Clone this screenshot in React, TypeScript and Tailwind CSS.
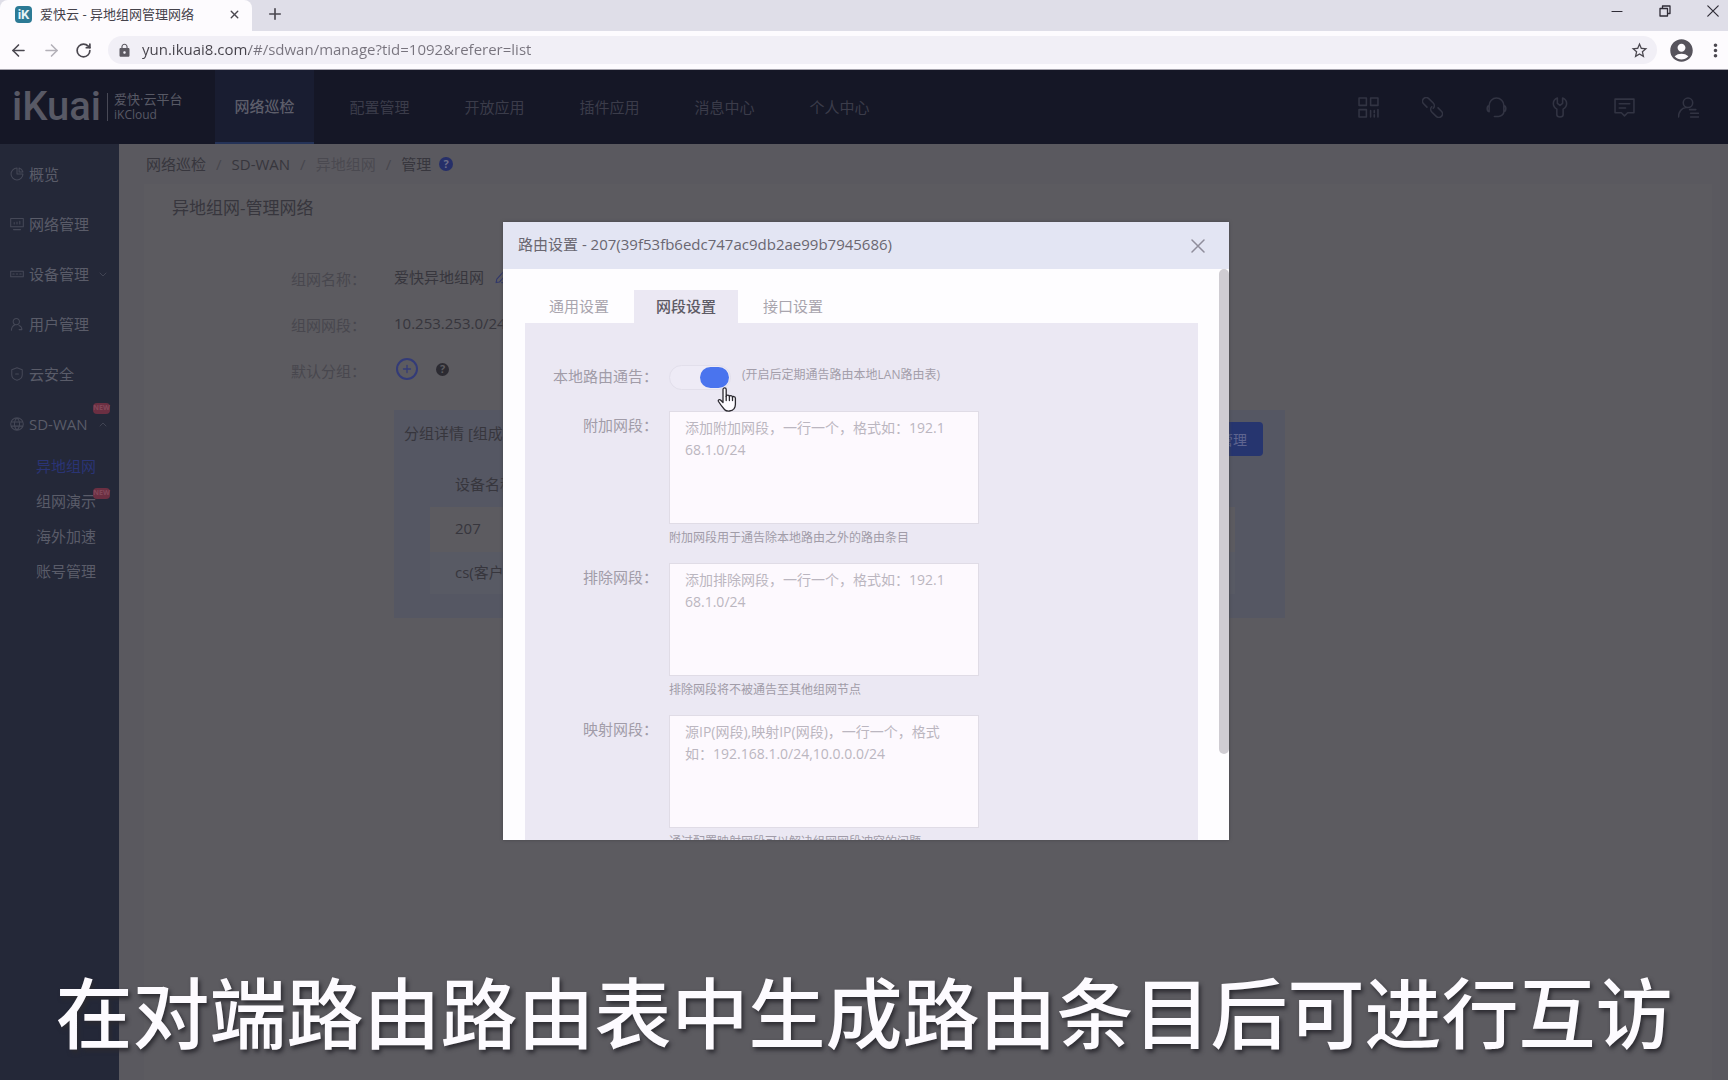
import React from "react";
import { ArrowLeft, ArrowRight, RotateCw, Plus, X } from "lucide-react";
import { MdLock, MdStarBorder, MdAccountCircle, MdMoreVert } from "react-icons/md";

const stroke = {
  fill: "none",
  stroke: "currentColor",
  strokeWidth: 1.5,
  strokeLinecap: "round" as const,
  strokeLinejoin: "round" as const,
};

function Svg({ size = 20, children }: { size?: number; children: React.ReactNode }) {
  return (
    <svg width={size} height={size} viewBox="0 0 20 20" {...stroke} aria-hidden="true" className="shrink-0">
      {children}
    </svg>
  );
}

function BrowserChrome() {
  return (
    <div className="shrink-0 border-b border-[#a5a3ac] bg-[#fdfbfe] text-[#4a474f]">
      <div className="flex h-[31px] items-stretch bg-[#dfdee8]">
        <div className="flex w-[252px] items-center rounded-t-lg bg-[#fdfbfe] pr-[11px] pb-0.5 pl-[15px]">
          <span className="mr-2 flex h-[17px] w-[17px] items-center justify-center rounded-sm bg-[#2c7a95] font-[Roboto] text-[13px] font-bold text-[#e6f4f8]">
            iK
          </span>
          <span className="flex-1 text-[13px] whitespace-nowrap text-[#45424a]">爱快云 - 异地组网管理网络</span>
          <button type="button" aria-label="关闭标签页">
            <X size={13} strokeWidth={2.6} />
          </button>
        </div>
        <button type="button" aria-label="新标签页" className="ml-3.5 pb-1">
          <Plus size={18} strokeWidth={2.2} />
        </button>
        <div className="ml-auto flex gap-9 pt-[5px] pr-[9px] text-[#2f2c36]">
          <button type="button" aria-label="最小化" className="h-3">
            <svg width="12" height="12" viewBox="0 0 12 12" {...stroke} strokeWidth={1.2}>
              <path d="M1 6.5h10" />
            </svg>
          </button>
          <button type="button" aria-label="还原" className="h-3">
            <svg width="12" height="12" viewBox="0 0 12 12" {...stroke} strokeWidth={1.3}>
              <path d="M1 3.5h7.5V11H1zM3.5 3.5V1H11v7.5H8.5" />
            </svg>
          </button>
          <button type="button" aria-label="关闭" className="h-3">
            <svg width="12" height="12" viewBox="0 0 12 12" {...stroke} strokeWidth={1.2}>
              <path d="M.8.8l10.4 10.4M11.2.8L.8 11.2" />
            </svg>
          </button>
        </div>
      </div>
      <div className="flex h-[38px] items-center pl-[9px]">
        <button type="button" aria-label="后退">
          <ArrowLeft size={19} strokeWidth={2} />
        </button>
        <button type="button" aria-label="前进" className="ml-3.5 text-[#b3b0b8]">
          <ArrowRight size={19} strokeWidth={2} />
        </button>
        <button type="button" aria-label="刷新" className="ml-3.5">
          <RotateCw size={17} strokeWidth={2.4} />
        </button>
        <div className="ml-4 flex h-7 flex-1 items-center rounded-full bg-[#f1eff6] pr-2 pl-[9px]">
          <MdLock size={15} className="mr-2.5 shrink-0 text-[#5d5a62]" />
          <input
            type="text"
            aria-label="地址"
            defaultValue="yun.ikuai8.com/#/sdwan/manage?tid=1092&referer=list"
            className="h-6 min-w-0 flex-1 bg-[linear-gradient(90deg,#45424a_107px,#77737d_107px)] bg-clip-text pb-0.5 text-[15px] text-transparent outline-none"
          />
          <MdStarBorder size={19} />
        </div>
        <MdAccountCircle size={27} className="ml-[11px] text-[#56535c]" />
        <button type="button" aria-label="菜单" className="ml-2.5 mr-0.5">
          <MdMoreVert size={21} />
        </button>
      </div>
    </div>
  );
}

const navItems = ["网络巡检", "配置管理", "开放应用", "插件应用", "消息中心", "个人中心"];

function Header() {
  return (
    <header className="flex h-[74px] shrink-0 items-stretch bg-[#151726] text-[#3b3c4a]">
      <div className="flex w-[215px] items-center pl-3 text-[#585965]">
        <span className="font-[Roboto] text-[40px] leading-8 font-medium">iKuai</span>
        <span className="ml-1.5 h-7 w-px bg-[#484956]" />
        <span className="ml-1.5 flex flex-col text-[12px] leading-[15px] whitespace-nowrap">
          <span className="text-[13px]">爱快·云平台</span>
          <span>iKCloud</span>
        </span>
      </div>
      <nav className="flex gap-4 text-[15px]">
        {navItems.map((item, i) => (
          <a
            key={item}
            href="#"
            className={
              i === 0
                ? "flex w-[99px] items-center justify-center border-b-2 border-[#253358] bg-[#191d31] font-medium text-[#5d5e6a]"
                : "flex w-[99px] items-center justify-center"
            }
          >
            {item}
          </a>
        ))}
      </nav>
      <div className="ml-auto flex items-center gap-[43px] pr-[29px] text-[#323443]">
        <Svg size={21}>
          <path d="M1 1h7v7H1zM12 1h7v7h-7zM1 12h7v7H1zM12 13v6M15.5 13v2M15.5 17v2M19 12v7" />
        </Svg>
        <Svg size={21}>
          <g transform="rotate(45 10 10)">
            <path d="M6 13.500H1.500a3.500 3.500 0 0 1 0-7h6a3.500 3.500 0 0 1 3.500 3.500" />
            <path d="M14 6.500h4.500a3.500 3.500 0 0 1 0 7h-6a3.500 3.500 0 0 1-3.500-3.500" />
          </g>
        </Svg>
        <Svg size={21}>
          <path d="M3 8a7 7 0 0 1 14 0M3 8c-2.500.500-2.500 5.500 0 6zM17 8c2.500.500 2.500 5.500 0 6zM17 14c0 3-3 4.500-5 4.500M8 18.500h4" />
        </Svg>
        <Svg size={21}>
          <path d="M7 1C2 3 2 9 6.500 11.500V17c0 2.800 6 2.800 6 0v-5.500C17 9 17 3 12 1v5L9.500 8 7 6z" />
        </Svg>
        <Svg size={21}>
          <path d="M1 2h18v13h-6l-3 3-3-3H1zM5 6.500h10M5 10.500h6" />
        </Svg>
        <Svg size={21}>
          <path d="M9.500 10a4.500 4.500 0 1 0 0-9 4.500 4.500 0 0 0 0 9zM.5 19c0-5 3-8.500 7-9M11 12h6M12 15.500h7.500M12 19h7.500" />
        </Svg>
      </div>
    </header>
  );
}

const sideItems = [
  { label: "概览", icon: <path d="M10 1.500a8.500 8.500 0 1 0 8.500 8.500H10zM13 1.500A8.500 8.500 0 0 1 18.500 7H13z" /> },
  { label: "网络管理", icon: <path d="M1 2h18v12H1zM5 18h10M6 8v2M10 7v3M14 6v4" /> },
  { label: "设备管理", icon: <path d="M1 6h18v8H1zM4 10h2M9 10h2M14 10h2" />, chevron: "M1 1l3 3 3-3" },
  { label: "用户管理", icon: <path d="M9 11a4.500 4.500 0 1 0 0-9 4.500 4.500 0 0 0 0 9zM2 19c0-5 3-7 5-8M13 12c3 1 4 3 4 6h-4" /> },
  { label: "云安全", icon: <path d="M10 1l7.500 3v7c0 4-4 7-7.500 8-3.500-1-7.500-4-7.500-8V4zM8 10h4" /> },
  {
    label: "SD-WAN",
    icon: <path d="M10 1a9 9 0 1 0 0 18 9 9 0 0 0 0-18zM10 1c-5 5-5 13 0 18M10 1c5 5 5 13 0 18M1.500 7h17M1.500 13h17" />,
    chevron: "M1 4l3-3 3 3",
    isNew: true,
  },
];

const subItems = [
  { label: "异地组网", active: true },
  { label: "组网演示", isNew: true },
  { label: "海外加速" },
  { label: "账号管理" },
];

function NewBadge() {
  return (
    <span className="absolute top-1 right-[9px] flex h-[11px] w-[17px] items-center justify-center rounded-sm bg-[#6b2f42] text-[7px] font-bold text-[#82485a]">
      NEW
    </span>
  );
}

function Sidebar() {
  return (
    <aside className="w-[119px] shrink-0 bg-[#242838] pt-[5px] text-[15px] text-[#5a5c69]">
      <ul>
        {sideItems.map((item) => (
          <li key={item.label} className="relative">
            <a href="#" className="flex h-[50px] items-center pl-2.5 whitespace-nowrap">
              <span className="mr-[5px] text-[#454857]">
                <Svg size={14}>{item.icon}</Svg>
              </span>
              {item.label}
              {item.chevron && (
                <svg width="8" height="5" viewBox="0 0 8 5" {...stroke} strokeWidth={1} className="mr-3 ml-auto text-[#414453]">
                  <path d={item.chevron} />
                </svg>
              )}
            </a>
            {item.isNew && <NewBadge />}
          </li>
        ))}
      </ul>
      <ul>
        {subItems.map((item) => (
          <li key={item.label} className="relative">
            <a
              href="#"
              className={item.active ? "flex h-[35px] items-center pl-9 text-[#2a3475]" : "flex h-[35px] items-center pl-9"}
            >
              {item.label}
            </a>
            {item.isNew && <NewBadge />}
          </li>
        ))}
      </ul>
    </aside>
  );
}

function InfoRow({ label, children }: { label: string; children: React.ReactNode }) {
  return (
    <div className="flex h-[46px] items-center">
      <dt className="w-[103px] shrink-0 pt-1 text-[#48474e]">{label}：</dt>
      <dd className="flex items-center">{children}</dd>
    </div>
  );
}

function Question({ className }: { className: string }) {
  return <span className={className}>?</span>;
}

function Content() {
  return (
    <main className="min-w-0 flex-1 bg-[#5a595f] pl-[25px] text-[15px] text-[#37363d]">
      <nav className="flex h-10 items-center gap-2 pl-0.5 whitespace-nowrap">
        <a href="#">网络巡检</a>
        <span className="px-0.5 text-[#47464d]">/</span>
        <a href="#">SD-WAN</a>
        <span className="px-0.5 text-[#47464d]">/</span>
        <a href="#" className="text-[#4a4950]">
          异地组网
        </a>
        <span className="px-0.5 text-[#47464d]">/</span>
        <span>管理</span>
        <Question className="flex h-3.5 w-3.5 items-center justify-center rounded-full bg-[#262f69] text-[11px] font-bold text-[#6d6e88]" />
      </nav>
      <section className="mr-4 h-full bg-[#5c5b60] pt-3 pl-7">
        <h1 className="text-[17px] leading-6">异地组网-管理网络</h1>
        <dl className="mt-[34px] pl-[119px]">
          <InfoRow label="组网名称">
            爱快异地组网
            <span className="ml-2.5 text-[#30376b]">
              <Svg size={14}>
                <path d="M3 18l1-5L14 2l4 4L8 17zM11 18h8" />
              </Svg>
            </span>
          </InfoRow>
          <InfoRow label="组网网段">10.253.253.0/24</InfoRow>
          <InfoRow label="默认分组">
            <button
              type="button"
              aria-label="添加分组"
              className="ml-0.5 flex h-[22px] w-[22px] items-center justify-center rounded-full border-2 border-[#333b78] text-[#333b78]"
            >
              <Plus size={12} strokeWidth={2.6} />
            </button>
            <Question className="ml-[18px] flex h-[13px] w-[13px] items-center justify-center rounded-full bg-[#2c2b32] text-[11px] font-bold text-[#5c5b60]" />
          </InfoRow>
        </dl>
        <div className="mt-[18px] mr-[427px] ml-[222px] bg-[#555763] pr-[50px] pb-6 pl-9">
          <div className="flex h-[50px] items-start">
            <h2 className="-ml-[26px] flex-1 pt-3">分组详情 [组成员]</h2>
            <button type="button" className="mt-3 -mr-7 h-[34px] rounded-sm bg-[#26356f] px-4 text-[14px] text-[#5f6590]">
              分组管理
            </button>
          </div>
          <table className="w-full text-left">
            <thead>
              <tr className="h-[47px]">
                <th className="pt-0.5 pl-[25px] font-normal">设备名称</th>
              </tr>
            </thead>
            <tbody>
              <tr className="h-[45px] bg-[#5c5b60]">
                <td className="pb-0.5 pl-[25px]">207</td>
              </tr>
              <tr className="h-[42px] bg-[#585a64]">
                <td className="pb-0.5 pl-[25px]">cs(客户端)</td>
              </tr>
            </tbody>
          </table>
        </div>
      </section>
    </main>
  );
}

const segments = [
  {
    id: "extra",
    label: "附加网段",
    placeholder: "添加附加网段，一行一个，格式如：192.168.1.0/24",
    help: "附加网段用于通告除本地路由之外的路由条目",
  },
  {
    id: "exclude",
    label: "排除网段",
    placeholder: "添加排除网段，一行一个，格式如：192.168.1.0/24",
    help: "排除网段将不被通告至其他组网节点",
  },
  {
    id: "mapping",
    label: "映射网段",
    placeholder: "源IP(网段),映射IP(网段)，一行一个，格式如：192.168.1.0/24,10.0.0.0/24",
    help: "通过配置映射网段可以解决组网网段冲突的问题",
  },
];

const tabs = ["通用设置", "网段设置", "接口设置"];

function HandCursor() {
  return (
    <svg
      width="20"
      height="26"
      viewBox="0 0 20 26"
      aria-hidden="true"
      className="absolute top-[22px] left-12"
      fill="#fdfbff"
      stroke="#2b2930"
      strokeWidth="1.3"
      strokeLinejoin="round"
      strokeLinecap="round"
    >
      <path d="M6 15.500V2.500a1.600 1.600 0 0 1 3.200 0V9.500c0-1.800 3.200-1.800 3.200.300 0-1.600 3.100-1.500 3.100.600 0-1.400 2.900-1.200 2.900.800v6.300c0 2-.7 3.200-1.400 4.300-1.500 2.700-7.500 2.900-9.300.900-1.300-1.500-4.200-5-6.200-8.200-.9-1.700 1.100-2.600 2.300-1.300z" />
      <path d="M9.200 9.500v4M12.400 10v3.500M15.500 10.500v3" fill="none" />
    </svg>
  );
}

function RouteDialog() {
  return (
    <div
      role="dialog"
      aria-label="路由设置"
      className="flex h-full w-[726px] flex-col overflow-hidden bg-[#fefdff] text-[15px] shadow-[0_0_3px_#45444a]"
    >
      <div className="flex h-[47px] shrink-0 items-center justify-between bg-[#e3e5f3] pr-6 pl-[15px]">
        <h2 className="pb-0.5 text-[15px] text-[#6a6771]">路由设置 - 207(39f53fb6edc747ac9db2ae99b7945686)</h2>
        <button type="button" aria-label="关闭" className="text-[#8f8d9b]">
          <svg width="14" height="14" viewBox="0 0 14 14" {...stroke}>
            <path d="M1 1l12 12M13 1L1 13" />
          </svg>
        </button>
      </div>
      <div className="flex min-h-0 flex-1 items-start overflow-hidden">
        <div className="flex-1 pt-[21px] pr-[21px] pl-[22px]">
          <div role="tablist" className="ml-0.5 flex gap-[3px]">
            {tabs.map((tab, i) => (
              <button
                key={tab}
                type="button"
                role="tab"
                aria-selected={i === 1}
                className={
                  i === 1
                    ? "h-[33px] bg-[#ebe8f3] px-[22px] font-medium text-[#5d5a64]"
                    : "h-[33px] px-[22px] text-[#a9a5ae]"
                }
              >
                {tab}
              </button>
            ))}
          </div>
          <form className="bg-[#ebe8f3] pt-[42px] text-[#a19ca8]">
            <div className="flex items-start">
              <label htmlFor="notice" className="w-[133px] shrink-0 text-right leading-[22px]">
                本地路由通告：
              </label>
              <span className="relative ml-[11px]">
                <input
                  id="notice"
                  type="checkbox"
                  defaultChecked
                  className="flex h-[25px] w-[62px] appearance-none items-center justify-end rounded-full border border-[#e2dfeb] bg-[#eeebf6] pr-px before:h-[21px] before:w-[29px] before:rounded-full before:bg-[#4a74ee] before:content-['']"
                />
                <HandCursor />
              </span>
              <span className="ml-[11px] text-[12px] leading-[20px] text-[#a39eaa]">(开启后定期通告路由本地LAN路由表)</span>
            </div>
            <div className="flex flex-col gap-4 pt-[21px]">
              {segments.map((s) => (
                <div key={s.id} className="flex items-start">
                  <label htmlFor={s.id} className="w-[133px] shrink-0 pt-[3px] text-right leading-[22px]">
                    {s.label}：
                  </label>
                  <div className="ml-[11px] w-[310px]">
                    <textarea
                      id={s.id}
                      placeholder={s.placeholder}
                      className="block h-[113px] w-full resize-none border border-[#e0dce6] bg-[#fdf9fe] py-[5px] pr-[30px] pl-[15px] text-[14px] leading-[22px] break-all placeholder:text-[#bbb6c0]"
                    />
                    <p className="pt-[5px] text-[12px] leading-[18px]">{s.help}</p>
                  </div>
                </div>
              ))}
            </div>
          </form>
        </div>
        <div className="h-[85%] w-2.5 shrink-0 rounded-full bg-[#cfccd2]" />
      </div>
    </div>
  );
}

export default function App() {
  return (
    <div className="relative flex h-screen flex-col overflow-hidden bg-[#5c5b60] font-['Open_Sans','Noto_Sans_CJK_SC',sans-serif] leading-normal">
      <BrowserChrome />
      <Header />
      <div className="flex min-h-0 flex-1 overflow-hidden">
        <Sidebar />
        <Content />
      </div>
      <div className="absolute inset-0 flex justify-center pt-[222px] pb-[240px] pl-1">
        <RouteDialog />
      </div>
      <p className="absolute inset-x-0 bottom-2.5 text-center text-[77px] leading-[112px] font-medium whitespace-nowrap text-[#fdfbff] [text-shadow:2px_3px_4px_#2b2a30]">
        在对端路由路由表中生成路由条目后可进行互访
      </p>
    </div>
  );
}
